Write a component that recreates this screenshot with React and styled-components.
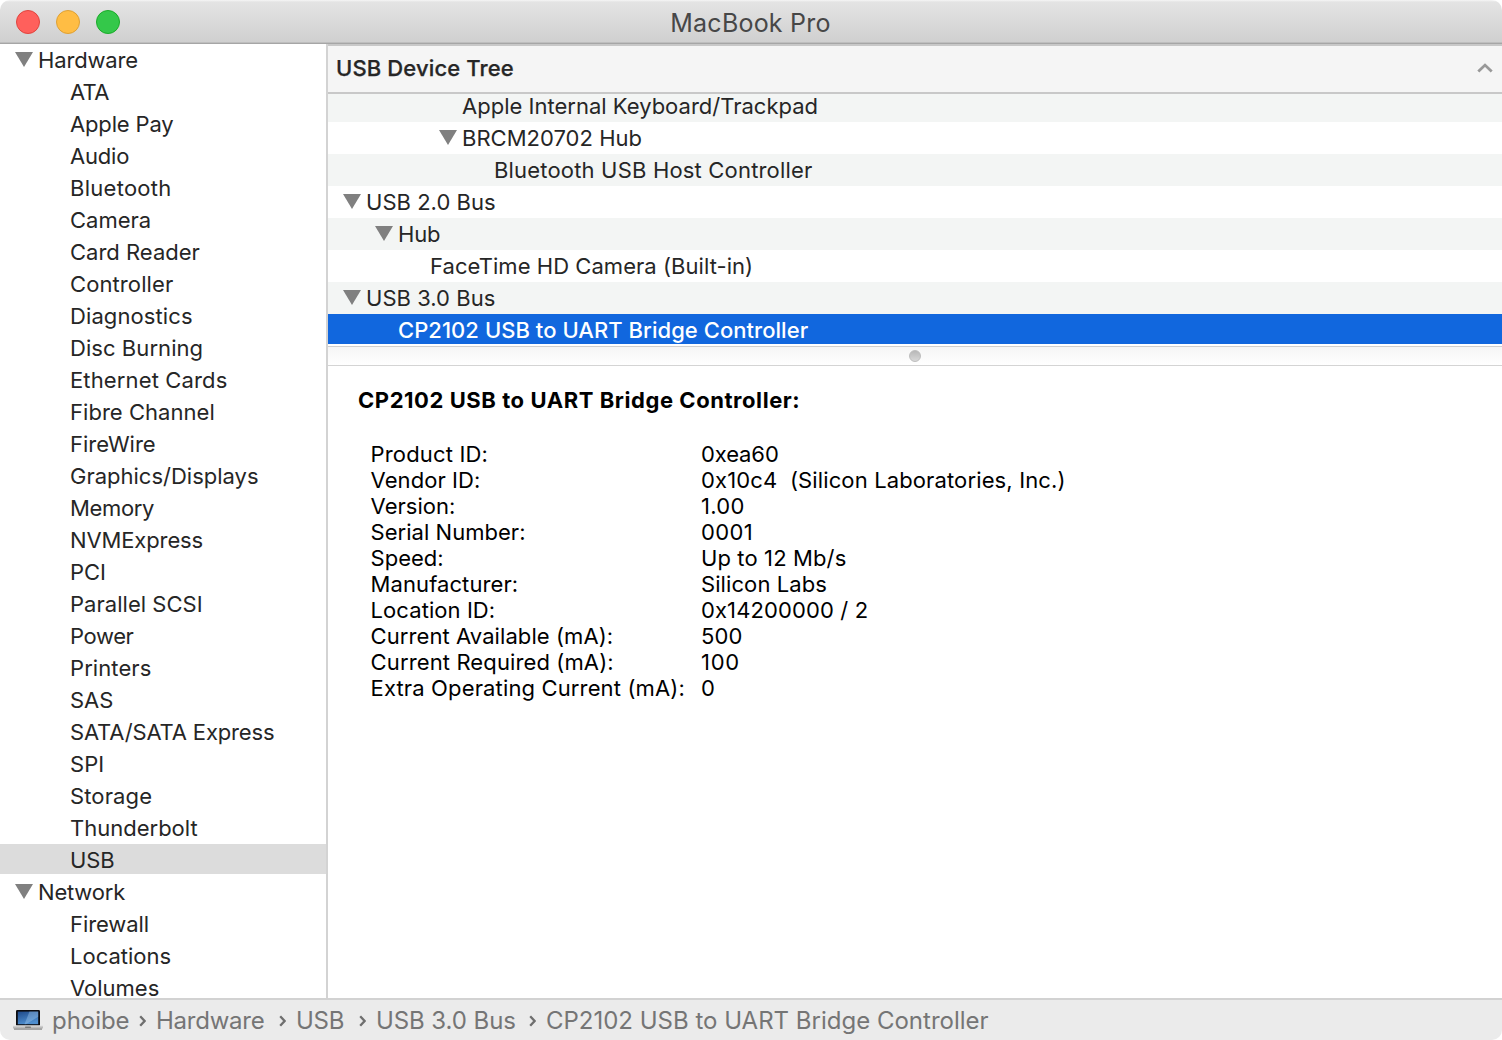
import React from "react";
import styled, { createGlobalStyle, css } from "styled-components";

const Global = createGlobalStyle`
  *, *::before, *::after { box-sizing: border-box; }
  html, body { margin: 0; background: #fff; }
  body { font-family: Inter, "Liberation Sans", sans-serif; font-size: 22px; overflow: hidden; }
`;

const Window = styled.div`
  display: flex;
  flex-direction: column;
  width: 1502px;
  height: 1040px;
  overflow: hidden;
  border-radius: 10px;
  background: #fff;
  color: #262626;
`;

const TitleBar = styled.header`
  display: grid;
  grid-template-columns: 1fr auto 1fr;
  align-items: center;
  flex: none;
  height: 44px;
  padding: 1px 16px 0;
  background: linear-gradient(#f6f6f6 0, #e4e4e4 2px, #d0d0d0 42px);
  border-bottom: 1px solid #a6a6a6;
  box-shadow: inset 0 -1px 0 #bebebe;
`;

const Lights = styled.div`
  display: flex;
  gap: 16px;
`;

const Light = styled.span`
  width: 24px;
  height: 24px;
  border-radius: 50%;
  border: 1px solid ${(p) => p.$edge};
  background: ${(p) => p.$fill};
`;

const Title = styled.h1`
  margin: 0;
  padding: 2px 1px 0 0;
  font-size: 25px;
  font-weight: 400;
  line-height: 30px;
  color: #474747;
  white-space: pre;
  letter-spacing: 0.22px;
`;

const Main = styled.div`
  display: flex;
  flex: 1;
  min-height: 0;
`;

const Sidebar = styled.nav`
  flex: none;
  width: 328px;
  border-right: 2px solid #d3d3d3;
`;

const Row = styled.div`
  display: flex;
  align-items: flex-start;
  flex: none;
  height: ${(p) => (p.$selected ? 30 : 32)}px;
  margin-bottom: ${(p) => (p.$selected ? 2 : 0)}px;
  padding-left: ${(p) => p.$indent}px;
`;

const SidebarRow = styled(Row)`
  background: ${(p) => (p.$selected ? "#dcdcdc" : "transparent")};

  &:last-child {
    height: 26px;
  }
`;

const TreeRow = styled(Row)`
  &:nth-child(odd) {
    background: #f3f5f4;
  }
  ${(p) =>
    p.$selected &&
    css`
      && {
        background: #1167de;
      }
      color: #fff;
      font-weight: 500;
    `}
`;

const Label = styled.span`
  padding-top: 6px;
  line-height: 20px;
  white-space: pre;
  letter-spacing: ${(p) => p.$track ?? 0}px;
`;

const Arrow = styled.span`
  width: 18px;
  height: 15px;
  margin: 8px 5px 0 0;
  background: #808080;
  clip-path: polygon(0 0, 100% 0, 50% 100%);
`;

const Content = styled.main`
  display: flex;
  flex-direction: column;
  flex: 1;
  min-width: 0;
`;

const TreeHeader = styled.div`
  display: flex;
  justify-content: space-between;
  align-items: center;
  flex: none;
  height: 50px;
  padding: 0 9px 2px 8px;
  background: #f5f5f5;
  border-top: 2px solid #c8c8c8;
  border-bottom: 2px solid #c8c8c8;
`;

const HeaderText = styled.span`
  font-weight: 500;
  line-height: 30px;
  letter-spacing: 0.13px;
  -webkit-text-stroke: 0.25px currentColor;
`;

const Tree = styled.div`
  display: flex;
  flex-direction: column;
  justify-content: flex-end;
  flex: none;
  height: 252px;
  overflow: hidden;
`;

const Splitter = styled.div`
  display: flex;
  justify-content: center;
  align-items: center;
  flex: none;
  height: 20px;
  background: linear-gradient(#f6f6f6, #ffffff);
  border-top: 1px solid #cfcfcf;
  border-bottom: 1px solid #d4d4d4;
`;

const Knob = styled.span`
  width: 12px;
  height: 12px;
  border-radius: 50%;
  background: linear-gradient(#b8b8b8, #d8d8d8);
  border: 1px solid #bdbdbd;
`;

const Details = styled.section`
  padding: 19px 0 0 30px;
  color: #000;
`;

const Heading = styled.h2`
  margin: 0;
  font-size: 22px;
  font-weight: 700;
  line-height: 30px;
  white-space: pre;
  letter-spacing: 0.56px;
`;

const Facts = styled.dl`
  display: grid;
  grid-template-columns: 330.4px 1fr;
  grid-auto-rows: 26px;
  margin: 26px 0 0 12.6px;
`;

const Fact = styled.span`
  line-height: 26px;
  white-space: pre;
  letter-spacing: ${(p) => p.$track ?? 0}px;
`;

const PathBar = styled.footer`
  display: flex;
  align-items: center;
  flex: none;
  height: 42px;
  padding-left: 13px;
  background: #ebebeb;
  border-top: 2px solid #d2d2d2;
  color: #757575;
  font-size: 24px;
`;

const Crumb = styled.span`
  flex: none;
  width: ${(p) => (p.$width ? `${p.$width}px` : "auto")};
  margin-left: ${(p) => p.$gap}px;
  padding-top: 1px;
  line-height: 30px;
  white-space: pre;
  letter-spacing: ${(p) => p.$track ?? 0}px;
`;

const ChevronIcon = styled.svg`
  flex: none;
  margin-top: 2px;
`;

const Chevron = () => (
  <ChevronIcon width="7" height="12" viewBox="0 0 7 12">
    <path d="M1.2 1.2 5.6 6 1.2 10.8" fill="none" stroke="#6f6f6f" strokeWidth="2.3" />
  </ChevronIcon>
);

const Collapse = () => (
  <svg width="16" height="10" viewBox="0 0 16 10">
    <path d="M1.3 8.6 8 2.1l6.7 6.5" fill="none" stroke="#999" strokeWidth="2.8" />
  </svg>
);

const Laptop = () => (
  <svg width="30" height="20" viewBox="0 0 30 20">
    <defs>
      <linearGradient id="screen" x1="0" y1="0" x2="0.4" y2="1">
        <stop offset="0" stopColor="#1f4a8a" />
        <stop offset="1" stopColor="#4f8fd0" />
      </linearGradient>
      <linearGradient id="base" x1="0" y1="0" x2="0" y2="1">
        <stop offset="0" stopColor="#e2e2e2" />
        <stop offset="1" stopColor="#a2a2a2" />
      </linearGradient>
    </defs>
    <rect x="3" y="0" width="24" height="15.6" rx="1.2" fill="#0c0c10" />
    <rect x="4.8" y="1.6" width="20.4" height="12.6" fill="url(#screen)" />
    <path d="M16.5 1.6h8.7v5.2L13 14.2h-1.5z" fill="#a5cdee" opacity=".38" />
    <path d="M0 15.4h30v1.8q0 1.6-1.6 1.6H1.6Q0 18.8 0 17.2z" fill="url(#base)" />
    <path d="M1 19.2h28" stroke="#7c7c7c" strokeWidth=".9" />
    <rect x="12" y="16.4" width="6" height="1.5" rx=".6" fill="#7d7d7d" />
  </svg>
);

const categories = [
  ["Hardware", -0.15, true],
  ["ATA", -0.7],
  ["Apple Pay", -0.15],
  ["Audio", -0.2],
  ["Bluetooth", 0.27],
  ["Camera", 0],
  ["Card Reader", 0],
  ["Controller", 0.1],
  ["Diagnostics", 0.1],
  ["Disc Burning", 0.06],
  ["Ethernet Cards", 0.14],
  ["Fibre Channel", 0.04],
  ["FireWire", 0],
  ["Graphics/Displays", 0],
  ["Memory", -0.35],
  ["NVMExpress", -0.12],
  ["PCI", -0.1],
  ["Parallel SCSI", 0.03],
  ["Power", -0.4],
  ["Printers", 0.08],
  ["SAS", 0],
  ["SATA/SATA Express", -0.16],
  ["SPI", 0.1],
  ["Storage", 0.12],
  ["Thunderbolt", 0],
  ["USB", -0.15],
  ["Network", -0.2, true],
  ["Firewall", -0.08],
  ["Locations", 0],
  ["Volumes", 0],
];

const devices = [
  { name: "Apple Internal Keyboard/Trackpad", indent: 134, track: 0.01 },
  { name: "BRCM20702 Hub", indent: 111, open: true, track: 0.02 },
  { name: "Bluetooth USB Host Controller", indent: 166, track: 0.18 },
  { name: "USB 2.0 Bus", indent: 15, open: true, track: 0.02 },
  { name: "Hub", indent: 47, open: true, track: -0.2 },
  { name: "FaceTime HD Camera (Built-in)", indent: 102, track: 0.05 },
  { name: "USB 3.0 Bus", indent: 15, open: true, track: 0.03 },
  { name: "CP2102 USB to UART Bridge Controller", indent: 70, track: 0.045, selected: true },
];

const facts = [
  ["Product ID:", 0.15, "0xea60", -0.1],
  ["Vendor ID:", 0.06, "0x10c4  (Silicon Laboratories, Inc.)", 0.13],
  ["Version:", 0.02, "1.00", 0.3],
  ["Serial Number:", 0.03, "0001", 0.4],
  ["Speed:", 0, "Up to 12 Mb/s", 0.12],
  ["Manufacturer:", 0.08, "Silicon Labs", 0.09],
  ["Location ID:", 0.07, "0x14200000 / 2", 0.12],
  ["Current Available (mA):", 0.08, "500", 0.1],
  ["Current Required (mA):", 0.12, "100", 0.7],
  ["Extra Operating Current (mA):", 0.14, "0", 0],
];

export default function App() {
  return (
    <>
      <Global />
      <Window>
        <TitleBar>
          <Lights>
            <Light $fill="#ff605c" $edge="#e0443e" />
            <Light $fill="#ffbd44" $edge="#dea034" />
            <Light $fill="#34c84a" $edge="#1aab29" />
          </Lights>
          <Title>MacBook Pro</Title>
        </TitleBar>
        <Main>
          <Sidebar>
            {categories.map(([name, track, group]) => (
              <SidebarRow key={name} $indent={group ? 15 : 70} $selected={name === "USB"}>
                {group && <Arrow />}
                <Label $track={track}>{name}</Label>
              </SidebarRow>
            ))}
          </Sidebar>
          <Content>
            <TreeHeader>
              <HeaderText>USB Device Tree</HeaderText>
              <Collapse />
            </TreeHeader>
            <Tree>
              {devices.map((d) => (
                <TreeRow key={d.name} $indent={d.indent} $selected={d.selected}>
                  {d.open && <Arrow />}
                  <Label $track={d.track}>{d.name}</Label>
                </TreeRow>
              ))}
            </Tree>
            <Splitter>
              <Knob />
            </Splitter>
            <Details>
              <Heading>CP2102 USB to UART Bridge Controller:</Heading>
              <Facts>
                {facts.map(([name, nameTrack, value, valueTrack]) => (
                  <React.Fragment key={name}>
                    <Fact $track={nameTrack}>{name}</Fact>
                    <Fact $track={valueTrack}>{value}</Fact>
                  </React.Fragment>
                ))}
              </Facts>
            </Details>
          </Content>
        </Main>
        <PathBar>
          <Laptop />
          <Crumb $gap={9} $width={87} $track={-0.05}>phoibe</Crumb>
          <Chevron />
          <Crumb $gap={10} $width={122.9} $track={-0.25}>Hardware</Crumb>
          <Chevron />
          <Crumb $gap={10} $width={63.4} $track={-0.2}>USB</Crumb>
          <Chevron />
          <Crumb $gap={9.6} $width={153.1} $track={-0.06}>USB 3.0 Bus</Crumb>
          <Chevron />
          <Crumb $gap={10}>CP2102 USB to UART Bridge Controller</Crumb>
        </PathBar>
      </Window>
    </>
  );
}
